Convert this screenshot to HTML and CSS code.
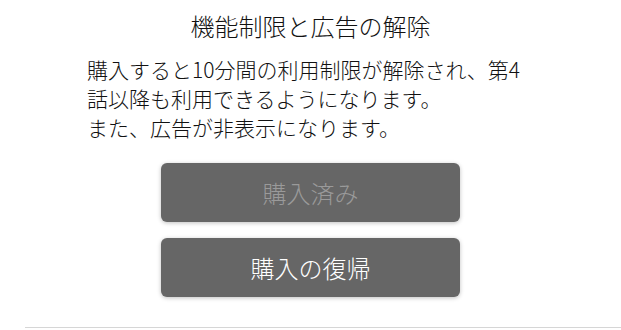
FILE: index.html
```html
<!DOCTYPE html>
<html lang="ja">
  <head>
    <meta charset="UTF-8" />
    <meta name="viewport" content="width=device-width, initial-scale=1.0" />
    <title>機能制限と広告の解除</title>
    <link rel="stylesheet" href="styles.css">
  </head>
  <body>
    <div class="purchase">
      <h1 class="title">機能制限と広告の解除</h1>
      <p class="description">
        購入すると10分間の利用制限が解除され、第4<br>話以降も利用できるようになります。<br>また、広告が非表示になります。
      </p>
      <div class="actions">
        <button class="btn disabled" disabled>購入済み</button>
        <button class="btn">購入の復帰</button>
      </div>
    </div>
    <hr class="divider">
  </body>
</html>
```

FILE: styles.css
```css
body,
html {
  margin: 0;
  padding: 0;
  background: #fff;
  font-family: "Noto Sans CJK JP", "Noto Sans", sans-serif;
  font-weight: 300;
  color: #111;
}

.purchase {
  height: 327px;
  display: flex;
  flex-direction: column;
  align-items: center;
}

.title {
  margin: 11px 0 0;
  font-size: 24px;
  font-weight: 300;
  line-height: 30px;
}

.description {
  align-self: flex-start;
  margin: 14px 0 0 87px;
  font-size: 21px;
  line-height: 29px;
}

.actions {
  margin-top: 21px;
  display: flex;
  flex-direction: column;
  gap: 16px;
}

.btn {
  width: 299px;
  height: 59px;
  border: none;
  border-radius: 6px;
  background: #666;
  color: #fff;
  font-family: inherit;
  font-weight: 300;
  font-size: 24px;
  box-shadow: 0 1px 4px rgba(0, 0, 0, 0.25);
}

.btn.disabled {
  color: #9a9a9a;
}

.divider {
  margin: 0 0 0 25px;
  border: none;
  border-top: 1px solid #d6d6d6;
}
```
